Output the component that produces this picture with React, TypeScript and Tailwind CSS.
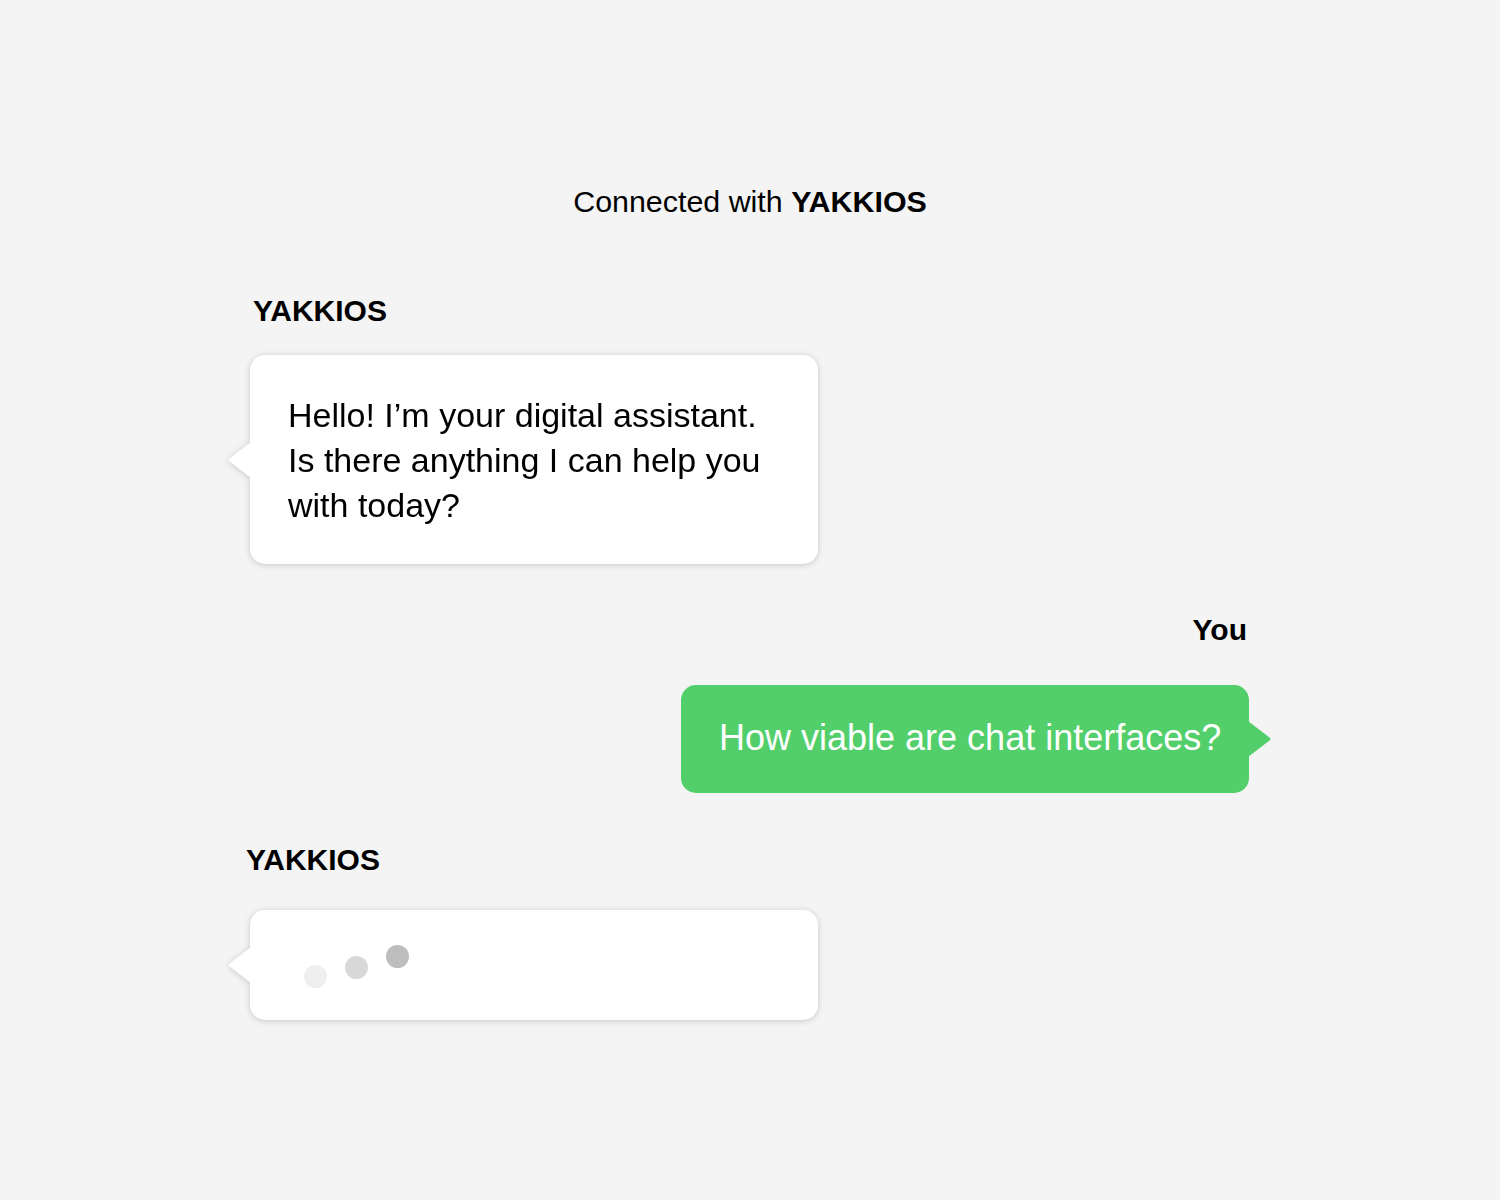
import React from "react";

const Tail: React.FC<{ side: "left" | "right"; color: string }> = ({ side, color }) => {
  const isLeft = side === "left";
  return (
    <svg
      width="24"
      height="36"
      viewBox="0 0 24 36"
      className={
        "absolute top-1/2 -translate-y-1/2 " +
        (isLeft ? "left-[-23px]" : "right-[-23px] rotate-180")
      }
    >
      <path d="M24 0 L2.5 16.5 Q0.5 18 2.5 19.5 L24 36 Z" fill={color} />
    </svg>
  );
};

const App: React.FC = () => {
  return (
    <div className="min-h-screen bg-[#f4f4f4] text-black font-['Liberation_Sans',Arial,sans-serif]">
      <div className="mx-auto flex w-[1000px] flex-col pt-[183px] pb-[120px]">
        <p className="text-center text-[30.4px] leading-[36px]">
          Connected with <span className="font-bold">YAKKIOS</span>
        </p>

        <div className="mt-[74px] ml-[3px] text-[30px] font-bold leading-[36px]">
          YAKKIOS
        </div>
        <div className="relative mt-[26px] w-[568px] drop-shadow-[0_1px_3px_rgba(0,0,0,0.18)]">
          <Tail side="left" color="#ffffff" />
          <div className="rounded-[15px] bg-white pl-[38px] pr-6 pt-[38px] pb-[36px] text-[34px] leading-[45px]">
            Hello! I’m your digital assistant.
            <br />
            Is there anything I can help you
            <br />
            with today?
          </div>
        </div>

        <div className="mt-[48px] pr-[3px] text-right text-[30px] font-bold leading-[36px]">
          You
        </div>
        <div className="relative mt-[37px] mr-[1px] w-[568px] self-end">
          <Tail side="right" color="#52cf6b" />
          <div className="rounded-[15px] bg-[#52cf6b] pl-[38px] pt-[31px] pb-[34px] text-[36px] leading-[43px] text-white">
            How viable are chat interfaces?
          </div>
        </div>

        <div className="mt-[49px] -ml-[4px] text-[30px] font-bold leading-[36px]">
          YAKKIOS
        </div>
        <div className="relative mt-[32px] w-[568px] drop-shadow-[0_1px_3px_rgba(0,0,0,0.18)]">
          <Tail side="left" color="#ffffff" />
          <div className="flex h-[110px] items-start gap-[18px] rounded-[15px] bg-white pl-[54px]">
            <span className="mt-[55px] h-[23px] w-[23px] rounded-full bg-[#efefef]" />
            <span className="mt-[46px] h-[23px] w-[23px] rounded-full bg-[#d8d8d8]" />
            <span className="mt-[35px] h-[23px] w-[23px] rounded-full bg-[#bdbdbd]" />
          </div>
        </div>
      </div>
    </div>
  );
};

export default App;
